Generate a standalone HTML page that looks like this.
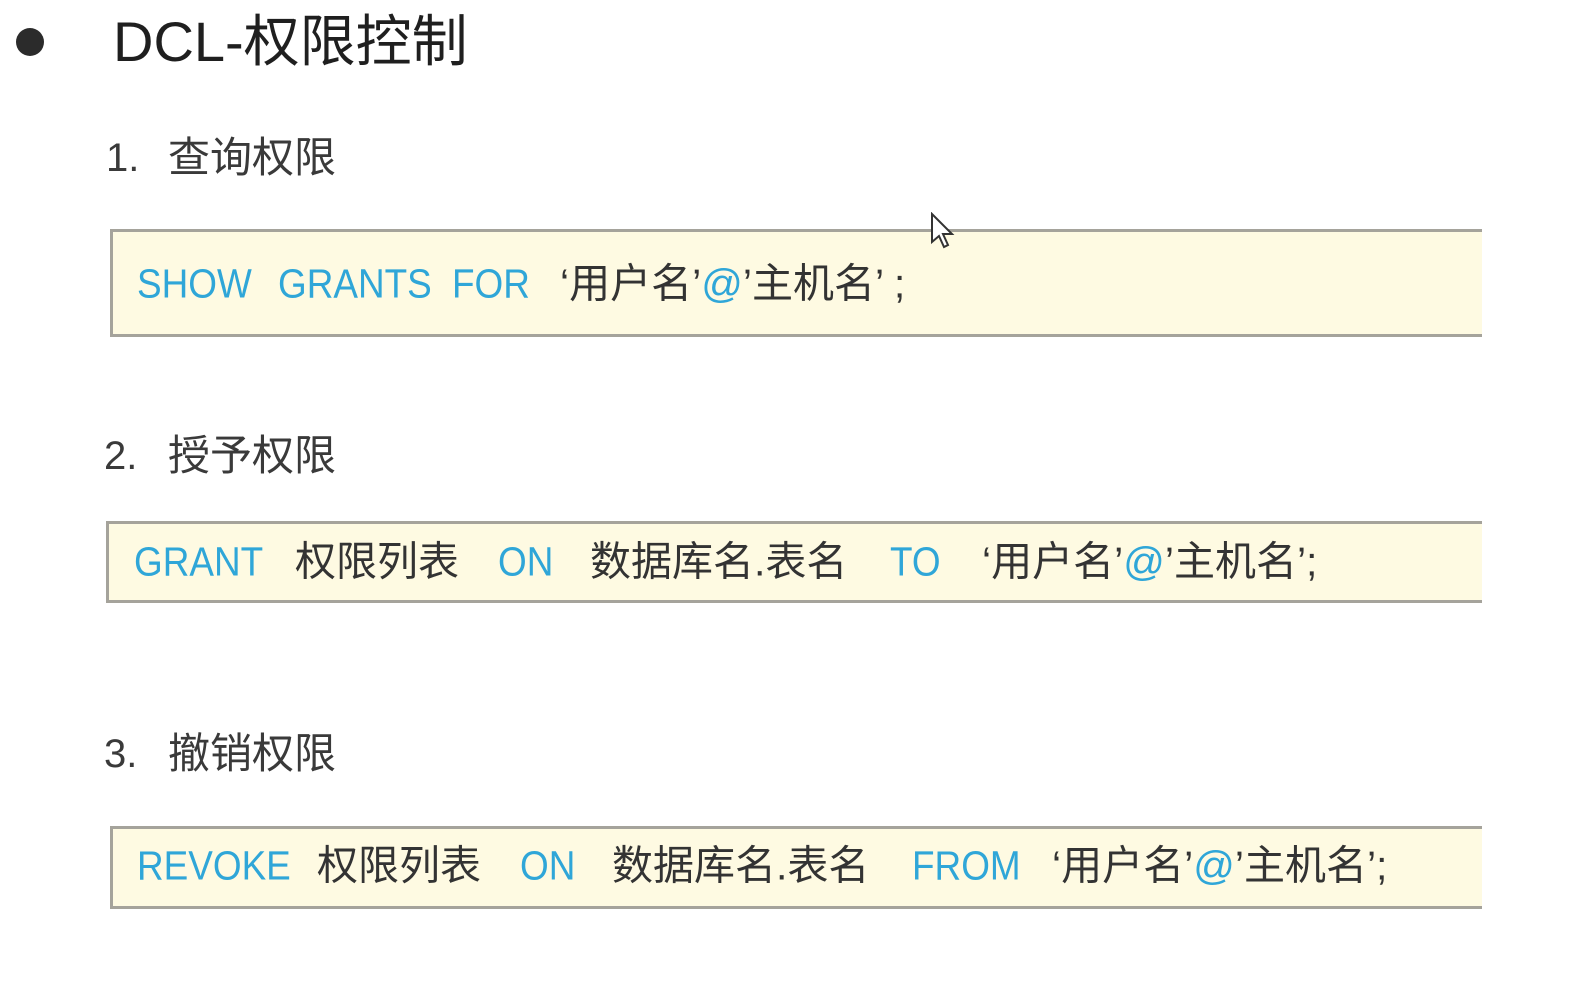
<!DOCTYPE html>
<html><head><meta charset="utf-8"><style>
body{margin:0;width:1591px;height:1002px;background:#fff;position:relative;overflow:hidden;font-family:"Liberation Sans","Noto Sans CJK SC",sans-serif}
.a{position:absolute;white-space:nowrap;line-height:1}
.box{position:absolute;background:#fefae2;border:3px solid #a5a39b;border-right:none;box-sizing:border-box}
.k{color:#2fa6d8}
.c{color:#333}
.code{font-size:41px;transform:translateY(-50%)}
.code.k{transform:translateY(-50%) scaleX(0.9);transform-origin:left center}
.h{font-size:40px;color:#3a3a3a;transform:translateY(-50%)}
</style></head><body>
<div class="a" style="left:16px;top:28px;width:28px;height:28px;border-radius:50%;background:#2b2b2b"></div>
<div class="a" style="left:113px;top:42px;font-size:56px;color:#1f1f1f;transform:translateY(-50%)">DCL-权限控制</div>

<div class="a h" style="left:106px;top:158px">1.</div><div class="a h" style="left:168px;top:158px;font-size:42px">查询权限</div>
<div class="a h" style="left:104px;top:456px">2.</div><div class="a h" style="left:168px;top:456px;font-size:42px">授予权限</div>
<div class="a h" style="left:104px;top:754px">3.</div><div class="a h" style="left:168px;top:754px;font-size:42px">撤销权限</div>

<div class="box" style="left:110px;top:229px;width:1372px;height:108px"></div>
<div class="box" style="left:106px;top:521px;width:1376px;height:82px"></div>
<div class="box" style="left:110px;top:826px;width:1372px;height:83px"></div>

<div class="a code k" style="left:137px;top:284px">SHOW</div>
<div class="a code k" style="left:278px;top:284px">GRANTS</div>
<div class="a code k" style="left:452px;top:284px">FOR</div>
<div class="a code c" style="left:560px;top:284px">‘用户名’<span class="k">@</span>’主机名’ ;</div>

<div class="a code k" style="left:134px;top:562px">GRANT</div>
<div class="a code c" style="left:295px;top:562px">权限列表</div>
<div class="a code k" style="left:498px;top:562px">ON</div>
<div class="a code c" style="left:590px;top:562px">数据库名.表名</div>
<div class="a code k" style="left:890px;top:562px">TO</div>
<div class="a code c" style="left:982px;top:562px">‘用户名’<span class="k">@</span>’主机名’;</div>

<div class="a code k" style="left:137px;top:866px">REVOKE</div>
<div class="a code c" style="left:317px;top:866px">权限列表</div>
<div class="a code k" style="left:520px;top:866px">ON</div>
<div class="a code c" style="left:612px;top:866px">数据库名.表名</div>
<div class="a code k" style="left:912px;top:866px">FROM</div>
<div class="a code c" style="left:1052px;top:866px">‘用户名’<span class="k">@</span>’主机名’;</div>

<svg class="a" style="left:930px;top:212px" width="30" height="40" viewBox="0 0 30 40"><path d="M2 2 L2 30 L9 24 L14 35 L18 33 L13 22 L22 22 Z" fill="#fff" stroke="#333" stroke-width="2"/></svg>
</body></html>
